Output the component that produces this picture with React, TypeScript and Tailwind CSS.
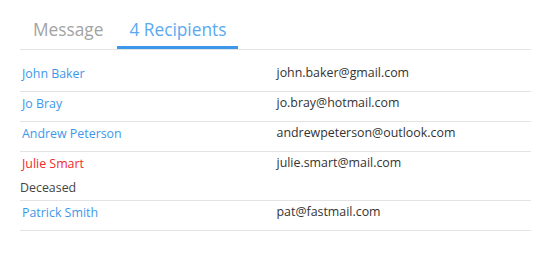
import React from 'react';

const recipients = [
  { name: 'John Baker', email: 'john.baker@gmail.com' },
  { name: 'Jo Bray', email: 'jo.bray@hotmail.com' },
  { name: 'Andrew Peterson', email: 'andrewpeterson@outlook.com' },
  { name: 'Julie Smart', email: 'julie.smart@mail.com', deceased: true },
  { name: 'Patrick Smith', email: 'pat@fastmail.com' },
];

export default function App() {
  return (
    <div className="min-h-[257px] bg-white px-[20px] pt-[14px] font-['Open_Sans',sans-serif] w-[550px]">
      <div className="w-[511px]">
        {/* Tabs */}
        <div className="flex gap-[2px] pl-[1px] border-b border-[#e3e3e3]">
          <button className="px-[12px] pt-[4px] pb-[4px] text-[17.3px] leading-[24px] text-[#a3a3a3] border-b-[3px] border-transparent">
            Message
          </button>
          <button className="px-[12px] pt-[4px] pb-[4px] text-[17.3px] leading-[24px] text-[#5aa9f1] border-b-[3px] border-[#3d98ec]">
            4 Recipients
          </button>
        </div>

        {/* Recipient rows */}
        <div className="mt-[12px]">
          {recipients.map(r => (
            <div key={r.email} className="grid grid-cols-2 min-h-[30px] border-b border-[#e3e3e3]">
              <div>
                <a className={`block px-[2px] text-[12.4px] leading-[24px] ${r.deceased ? 'text-[#ef2b2b]' : 'text-[#3d98ec]'}`}>
                  {r.name}
                </a>
                {r.deceased && (
                  <div className="text-[12.4px] leading-[24px] text-[#444444]">Deceased</div>
                )}
              </div>
              <div className="pl-[1px] text-[12.4px] leading-[22px] text-[#333333]">
                {r.email}
              </div>
            </div>
          ))}
        </div>
      </div>
    </div>
  );
}
